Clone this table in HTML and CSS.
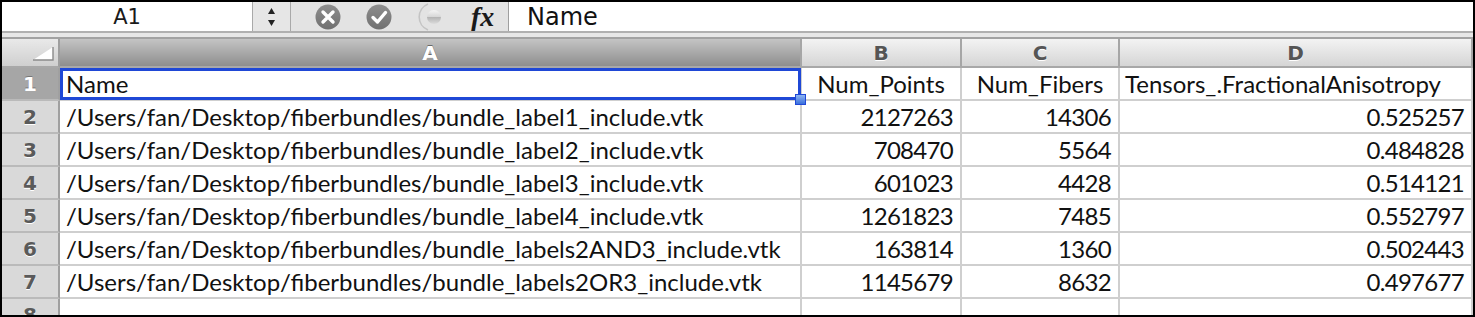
FILE: index.html
```html
<!DOCTYPE html>
<html>
<head>
<meta charset="utf-8">
<link rel="stylesheet" href="styles.css">
</head>
<body>
<div class="window">
  <div class="formula-bar">
    <div class="name-box">A1</div>
    <div class="spinner">
      <svg width="37" height="29" viewBox="0 0 37 29">
        <path d="M15 12 L18.5 6 L22 12 Z" fill="#222"/>
        <path d="M15 18 L22 18 L18.5 24 Z" fill="#222"/>
      </svg>
    </div>
    <div class="tools">
      <svg class="tool-icons" width="168" height="29" viewBox="0 0 168 29">
        <defs>
          <linearGradient id="gbtn" x1="0" y1="0" x2="0" y2="1">
            <stop offset="0" stop-color="#8e8e8e"/>
            <stop offset="1" stop-color="#707070"/>
          </linearGradient>
          <linearGradient id="gdot" x1="0" y1="0" x2="0" y2="1">
            <stop offset="0" stop-color="#f4f4f4"/>
            <stop offset="0.5" stop-color="#d6d6d6"/>
            <stop offset="0.52" stop-color="#b4b4b4"/>
            <stop offset="1" stop-color="#dcdcdc"/>
          </linearGradient>
        </defs>
        <circle cx="37" cy="15" r="12.5" fill="url(#gbtn)"/>
        <path d="M32 10 L42 20 M42 10 L32 20" stroke="#fff" stroke-width="3.4" stroke-linecap="round"/>
        <circle cx="88" cy="15" r="12.5" fill="url(#gbtn)"/>
        <path d="M82 15.5 L86.5 20 L94.5 10.5" stroke="#fff" stroke-width="3.4" fill="none" stroke-linecap="round" stroke-linejoin="round"/>
        <path d="M137 2 A14 14 0 0 0 137 28" stroke="#c4c4c4" stroke-width="1.6" fill="none"/>
        <circle cx="143" cy="15" r="7" fill="url(#gdot)"/>
      </svg>
      <span class="fx">fx</span>
    </div>
    <div class="formula-input">Name</div>
  </div>
  <div class="divider"></div>
  <div class="sheet">
    <div class="corner">
      <svg width="22" height="15" viewBox="0 0 22 15">
        <path d="M21 1 L21 14 L1 14 Z" fill="#fff"/>
        <path d="M21 1 L21 14 L1 14" stroke="#8a8a8a" stroke-width="1.4" fill="none"/>
      </svg>
    </div>
    <div class="col-h sel">A</div>
    <div class="col-h">B</div>
    <div class="col-h">C</div>
    <div class="col-h">D</div>

    <div class="row-h sel">1</div>
    <div class="cell active">Name<span class="sel-box"></span><span class="handle"></span></div>
    <div class="cell center">Num_Points</div>
    <div class="cell center">Num_Fibers</div>
    <div class="cell tight">Tensors_.FractionalAnisotropy</div>

    <div class="row-h">2</div>
    <div class="cell">/Users/fan/Desktop/fiberbundles/bundle_label1_include.vtk</div>
    <div class="cell num">2127263</div>
    <div class="cell num">14306</div>
    <div class="cell num">0.525257</div>

    <div class="row-h">3</div>
    <div class="cell">/Users/fan/Desktop/fiberbundles/bundle_label2_include.vtk</div>
    <div class="cell num">708470</div>
    <div class="cell num">5564</div>
    <div class="cell num">0.484828</div>

    <div class="row-h">4</div>
    <div class="cell">/Users/fan/Desktop/fiberbundles/bundle_label3_include.vtk</div>
    <div class="cell num">601023</div>
    <div class="cell num">4428</div>
    <div class="cell num">0.514121</div>

    <div class="row-h">5</div>
    <div class="cell">/Users/fan/Desktop/fiberbundles/bundle_label4_include.vtk</div>
    <div class="cell num">1261823</div>
    <div class="cell num">7485</div>
    <div class="cell num">0.552797</div>

    <div class="row-h">6</div>
    <div class="cell">/Users/fan/Desktop/fiberbundles/bundle_labels2AND3_include.vtk</div>
    <div class="cell num">163814</div>
    <div class="cell num">1360</div>
    <div class="cell num">0.502443</div>

    <div class="row-h">7</div>
    <div class="cell">/Users/fan/Desktop/fiberbundles/bundle_labels2OR3_include.vtk</div>
    <div class="cell num">1145679</div>
    <div class="cell num">8632</div>
    <div class="cell num">0.497677</div>

    <div class="row-h">8</div>
    <div class="cell"></div>
    <div class="cell"></div>
    <div class="cell"></div>
    <div class="cell"></div>
  </div>
</div>
</body>
</html>
```
FILE: styles.css
```css
html, body {
  margin: 0;
  padding: 0;
  background: #fff;
}

.window {
  width: 1475px;
  height: 317px;
  box-sizing: border-box;
  border: 2px solid #000;
  overflow: hidden;
  background: #fff;
  display: flex;
  flex-direction: column;
}

/* ---------- formula bar ---------- */
.formula-bar {
  flex: none;
  height: 29px;
  display: flex;
}

.name-box {
  width: 250px;
  display: flex;
  align-items: center;
  justify-content: center;
  font: 21px "DejaVu Sans", sans-serif;
  color: #1a1a1a;
}

.spinner {
  width: 37px;
  flex: none;
  background: #e6e6e6;
  border-left: 1px solid #a9a9a9;
  border-right: 1px solid #a9a9a9;
  display: flex;
}

.tools {
  width: 217px;
  flex: none;
  background: #e3e3e3;
  display: flex;
  align-items: center;
}

.tool-icons {
  display: block;
}

.fx {
  margin-left: 12px;
  font: italic bold 28px "Liberation Serif", serif;
  color: #1a1a1a;
  line-height: 29px;
}

.formula-input {
  flex: 1;
  border-left: 1px solid #9f9f9f;
  padding-left: 18px;
  display: flex;
  align-items: center;
  font: 24px "DejaVu Sans", sans-serif;
  color: #111;
}

.divider {
  flex: none;
  height: 8px;
  box-sizing: border-box;
  border-top: 2px solid #b0b0b0;
  border-bottom: 2px solid #a2a2a2;
  background: #e7e7e7;
}

/* ---------- sheet ---------- */
.sheet {
  flex: 1;
  display: grid;
  grid-template-columns: 58px 742px 160px 158px 1fr;
  grid-template-rows: 29px;
  grid-auto-rows: 33px;
  background: #fff;
}

.corner {
  box-sizing: border-box;
  background: linear-gradient(#e9e9e9, #cfcfcf);
  border-right: 2px solid #9e9e9e;
  border-bottom: 2px solid #a8a8a8;
  display: flex;
  align-items: flex-end;
  justify-content: flex-end;
  padding: 0 4px 5px 0;
}

.corner svg {
  display: block;
}

.col-h {
  box-sizing: border-box;
  background: linear-gradient(#f3f3f3, #d5d5d5);
  border-right: 2px solid #a6a6a6;
  border-bottom: 2px solid #a8a8a8;
  display: flex;
  align-items: center;
  justify-content: center;
  font: bold 20px "DejaVu Sans", sans-serif;
  color: #555;
  text-shadow: 0 1px 0 #fff;
}

.col-h.sel {
  background: linear-gradient(#c4c4c4, #8e8e8e);
  color: #fff;
  text-shadow: 0 -1px 0 #6a6a6a;
}

.row-h {
  box-sizing: border-box;
  background: #d9d9d9;
  border-right: 2px solid #a0a0a0;
  border-bottom: 2px solid #bababa;
  display: flex;
  align-items: center;
  justify-content: center;
  font: bold 20px "DejaVu Sans", sans-serif;
  color: #5a5a5a;
  text-shadow: 0 1px 0 #fff;
}

.row-h.sel {
  background: #a6a6a6;
  color: #fff;
  text-shadow: 0 -1px 0 #777;
}

.cell {
  box-sizing: border-box;
  border-right: 2px solid #cfcfcf;
  border-bottom: 2px solid #cfcfcf;
  padding: 0 6px;
  display: flex;
  align-items: center;
  font: 24px "Lato", sans-serif;
  color: #111;
  white-space: nowrap;
  overflow: hidden;
}

.cell.num {
  justify-content: flex-end;
  padding-right: 7px;
  letter-spacing: -0.7px;
}

.cell.center {
  justify-content: center;
}

.cell.tight {
  padding-left: 5px;
}

.cell.active {
  position: relative;
  overflow: visible;
}

.sel-box {
  position: absolute;
  left: 0;
  top: 0;
  right: -1px;
  bottom: -1px;
  border: 3px solid #1f48d6;
  z-index: 2;
}

.handle {
  position: absolute;
  right: -6px;
  bottom: -6px;
  width: 9px;
  height: 9px;
  border: 1px solid #1f48d6;
  background: linear-gradient(#8fb6f2, #3a6fdc);
  z-index: 3;
}
```
